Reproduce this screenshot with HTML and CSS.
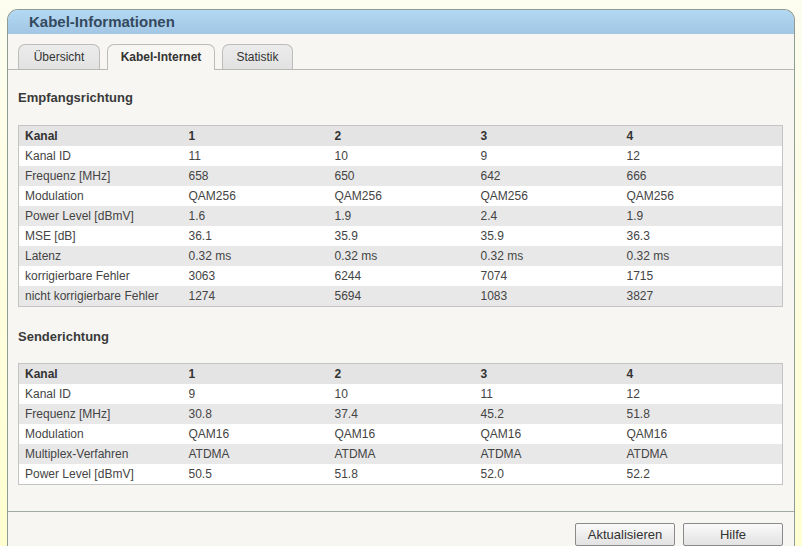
FILE: index.html
```html
<!DOCTYPE html>
<html lang="de">
<head>
<meta charset="utf-8">
<title>Kabel-Informationen</title>
<link rel="stylesheet" href="styles.css">
</head>
<body>
<div class="panel">
  <div class="panel-head">Kabel-Informationen</div>
  <div class="panel-body">
    <div class="tabs">
      <div class="tab">Übersicht</div>
      <div class="tab active">Kabel-Internet</div>
      <div class="tab">Statistik</div>
    </div>
    <div class="content">
      <h2 class="section">Empfangsrichtung</h2>
      <table class="data">
        <colgroup><col class="c0"><col class="c1"><col class="c1"><col class="c1"><col></colgroup>
        <tr class="hd"><td>Kanal</td><td>1</td><td>2</td><td>3</td><td>4</td></tr>
        <tr><td>Kanal ID</td><td>11</td><td>10</td><td>9</td><td>12</td></tr>
        <tr><td>Frequenz [MHz]</td><td>658</td><td>650</td><td>642</td><td>666</td></tr>
        <tr><td>Modulation</td><td>QAM256</td><td>QAM256</td><td>QAM256</td><td>QAM256</td></tr>
        <tr><td>Power Level [dBmV]</td><td>1.6</td><td>1.9</td><td>2.4</td><td>1.9</td></tr>
        <tr><td>MSE [dB]</td><td>36.1</td><td>35.9</td><td>35.9</td><td>36.3</td></tr>
        <tr><td>Latenz</td><td>0.32 ms</td><td>0.32 ms</td><td>0.32 ms</td><td>0.32 ms</td></tr>
        <tr><td>korrigierbare Fehler</td><td>3063</td><td>6244</td><td>7074</td><td>1715</td></tr>
        <tr><td>nicht korrigierbare Fehler</td><td>1274</td><td>5694</td><td>1083</td><td>3827</td></tr>
      </table>
      <h2 class="section second">Senderichtung</h2>
      <table class="data">
        <colgroup><col class="c0"><col class="c1"><col class="c1"><col class="c1"><col></colgroup>
        <tr class="hd"><td>Kanal</td><td>1</td><td>2</td><td>3</td><td>4</td></tr>
        <tr><td>Kanal ID</td><td>9</td><td>10</td><td>11</td><td>12</td></tr>
        <tr><td>Frequenz [MHz]</td><td>30.8</td><td>37.4</td><td>45.2</td><td>51.8</td></tr>
        <tr><td>Modulation</td><td>QAM16</td><td>QAM16</td><td>QAM16</td><td>QAM16</td></tr>
        <tr><td>Multiplex-Verfahren</td><td>ATDMA</td><td>ATDMA</td><td>ATDMA</td><td>ATDMA</td></tr>
        <tr><td>Power Level [dBmV]</td><td>50.5</td><td>51.8</td><td>52.0</td><td>52.2</td></tr>
      </table>
    </div>
    <div class="actions">
      <button class="btn">Aktualisieren</button>
      <button class="btn">Hilfe</button>
    </div>
  </div>
</div>
</body>
</html>
```
FILE: styles.css
```css
html, body {
  margin: 0;
  padding: 0;
}
body {
  background: linear-gradient(#fdfdf0, #ffffd0);
  font-family: "Liberation Sans", Arial, sans-serif;
  font-size: 12px;
  color: #333;
  height: 546px;
  overflow: hidden;
}
.panel {
  margin: 9px 0 0 7px;
  width: 786px;
  border: 1px solid #8e9c94;
  border-bottom: none;
  border-radius: 11px 11px 0 0;
  background: #f7f6f2;
  height: 560px;
  overflow: hidden;
}
.panel-head {
  height: 24px;
  line-height: 24px;
  padding-left: 21px;
  background: linear-gradient(#b2d9f4, #a2c6e4);
  font-size: 15px;
  font-weight: bold;
  color: #34495e;
}
.panel-body {
  padding-top: 10px;
}
.tabs {
  display: flex;
  gap: 7px;
  padding-left: 10px;
  border-bottom: 1px solid #b8b8b4;
  height: 25px;
}
.tab {
  height: 25px;
  line-height: 24px;
  padding: 0;
  border: 1px solid #bcbcbc;
  border-bottom: none;
  border-radius: 7px 7px 0 0;
  background: linear-gradient(#ececec, #e2e2e2);
  color: #333;
  box-sizing: border-box;
  text-align: center;
  white-space: nowrap;
  flex: none;
}
.tab:nth-child(1) { width: 82px; }
.tab.active {
  width: 108px;
  font-weight: bold;
  background: #f7f6f2;
  height: 26px;
  color: #333;
}
.tab:nth-child(3) { width: 71px; }
.content {
  padding: 0 10px 0 10px;
}
.section {
  margin: 20px 0 19px 0;
  font-size: 13px;
  line-height: 16px;
  font-weight: bold;
  color: #3a3a3a;
}
.section.second {
  margin-top: 22px;
  margin-bottom: 18px;
}
.data {
  width: 765px;
  border-collapse: collapse;
  border: 1px solid #c4c4c4;
  table-layout: fixed;
}
.data col.c0 { width: 164px; }
.data col.c1 { width: 146px; }
.data td {
  height: 20px;
  padding: 0 0 0 6px;
  line-height: 20px;
  color: #444;
  white-space: nowrap;
}
.data tr:nth-child(odd) td {
  background: #e8e8e8;
}
.data tr:nth-child(even) td {
  background: #ffffff;
}
.data tr.hd td {
  font-weight: bold;
  color: #333;
  background: #e4e4e4;
}
.actions {
  margin-top: 26px;
  border-top: 1px solid #a0aaa2;
  display: flex;
  justify-content: flex-end;
  gap: 8px;
  padding: 11px 11px 0 0;
}
.btn {
  width: 100px;
  height: 23px;
  font-family: "Liberation Sans", Arial, sans-serif;
  font-size: 13px;
  color: #333;
  border: 1px solid #8a8a8a;
  border-radius: 2px;
  background: linear-gradient(#fafafa, #e2e2e2);
  padding: 0;
}
```
